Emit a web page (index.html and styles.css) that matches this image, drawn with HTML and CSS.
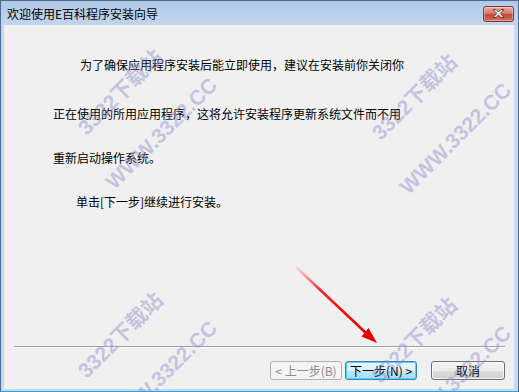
FILE: index.html
```html
<!DOCTYPE html>
<html lang="zh-CN">
<head>
  <meta charset="UTF-8">
  <title>欢迎使用E百科程序安装向导</title>
  <link rel="stylesheet" href="styles.css">
</head>
<body>
  <div class="window">
    <div class="titlebar">
      <span class="title">欢迎使用E百科程序安装向导</span>
      <div class="close-btn">
        <svg width="15" height="11" viewBox="0 0 15 11">
          <path d="M2 1.5 L5 1.5 L7.5 4 L10 1.5 L13 1.5 L9.2 5.5 L13 9.5 L10 9.5 L7.5 7 L5 9.5 L2 9.5 L5.8 5.5 Z" fill="#fff" stroke="#5a2a24" stroke-width="0.9" stroke-linejoin="round"/>
        </svg>
      </div>
    </div>

    <div class="client">
      <div class="content">
        <p class="line first">为了确保应用程序安装后能立即使用，建议在安装前你关闭你</p>
        <p class="line">正在使用的所用应用程序，这将允许安装程序更新系统文件而不用</p>
        <p class="line">重新启动操作系统。</p>
        <p class="line last">单击[下一步]继续进行安装。</p>
      </div>
      <div class="footer">
        <div class="separator"></div>
        <div class="buttons">
          <button class="btn disabled">&lt; 上一步(B)</button>
          <button class="btn default">下一步(N) &gt;</button>
          <button class="btn cancel">取消</button>
        </div>
      </div>
    </div>

    <!-- watermark overlay -->
    <div class="watermark wm-1"><span>3322下载站</span><span>WWW.3322.CC</span></div>
    <div class="watermark wm-2"><span>3322下载站</span><span>WWW.3322.CC</span></div>
    <div class="watermark wm-3"><span>3322下载站</span><span>WWW.3322.CC</span></div>
    <div class="watermark wm-4"><span>3322下载站</span><span>WWW.3322.CC</span></div>

    <svg class="arrow" width="519" height="392" viewBox="0 0 519 392">
      <defs>
        <linearGradient id="arrowFade" x1="297" y1="268" x2="366" y2="333" gradientUnits="userSpaceOnUse">
          <stop offset="0" stop-color="#ff3030" stop-opacity="0.15"/>
          <stop offset="0.35" stop-color="#f01010" stop-opacity="0.9"/>
          <stop offset="1" stop-color="#e80000"/>
        </linearGradient>
      </defs>
      <line x1="297" y1="268" x2="367" y2="334" stroke="url(#arrowFade)" stroke-width="2.6" stroke-linecap="round"/>
      <polygon points="377,343 361.5,336.5 368.5,328" fill="#e80000"/>
    </svg>
  </div>
</body>
</html>
```

FILE: styles.css
```css
body {
  margin: 0;
  padding: 0;
  font-family: "Noto Sans CJK SC", "Liberation Sans", sans-serif;
  font-size: 12px;
  color: #000;
  background-color: #f0f0f0;
}
.window {
  position: relative;
  width: 519px;
  height: 392px;
  box-sizing: border-box;
  background: linear-gradient(#b0c9e6, #c6d9ef 30px, #c6d9ef);
  border: 1px solid #4d6d8f;
  border-bottom: 1px solid #2aa6d6;
  overflow: hidden;
  display: flex;
  flex-direction: column;
}
.titlebar {
  height: 24px;
  display: flex;
  align-items: center;
  justify-content: space-between;
  padding: 0 4px 0 6px;
}
.title {
  font-size: 12px;
  line-height: 14px;
  color: #000;
  margin-top: 2px;
}
.close-btn {
  width: 29px;
  height: 14px;
  margin-top: 1px;
  border: 1px solid #7c3a33;
  border-radius: 3px;
  background: linear-gradient(#eab0a6, #d47868 45%, #c24634 55%, #d2735f);
  box-shadow: inset 0 0 0 1px rgba(255, 255, 255, 0.35);
  display: flex;
  align-items: center;
  justify-content: center;
}
.client {
  flex: 1;
  margin: 0 4px 2px 3px;
  background-color: #f0f0f0;
  display: flex;
  flex-direction: column;
}
.content {
  flex: 1;
  padding: 30px 0 0 49px;
}
.line {
  margin: 0 0 24px;
  line-height: 20px;
  white-space: nowrap;
}
.line.first {
  text-indent: 27px;
  margin-bottom: 29px;
}
.line.last {
  text-indent: 23px;
}
.footer {
  padding: 0 9px 9px 10px;
}
.separator {
  border-top: 1px solid #a0a0a0;
  border-bottom: 1px solid #fff;
  margin-bottom: 13px;
}
.buttons {
  display: flex;
  justify-content: flex-end;
}
.btn {
  height: 19px;
  width: 72px;
  padding: 0;
  font-family: "Noto Sans CJK SC", "Liberation Sans", sans-serif;
  font-size: 12px;
  line-height: 15px;
  color: #000;
  border: 1px solid #707070;
  border-radius: 3px;
  background: linear-gradient(#f2f2f2, #ebebeb 50%, #dddddd 51%, #cfcfcf);
  box-shadow: inset 0 0 0 1px rgba(255, 255, 255, 0.7);
}
.btn.disabled {
  color: #8d8d8d;
  border-color: #adb2b5;
  background: #f4f4f4;
  box-shadow: none;
}
.btn.default {
  margin-left: 3px;
  border-color: #3c7fb1;
  background: linear-gradient(#eaf6fd, #d9f0fc 50%, #bee6fd 51%, #a7d9f5);
  box-shadow: inset 0 0 0 1px #48d8fb;
}
.btn.cancel {
  width: 74px;
  margin-left: 14px;
}
.watermark {
  position: absolute;
  width: 240px;
  height: 116px;
  display: flex;
  flex-direction: column;
  align-items: center;
  font-family: "Liberation Sans", "Noto Sans CJK SC", sans-serif;
  font-weight: bold;
  font-size: 21px;
  line-height: 58px;
  color: rgba(140, 140, 205, 0.45);
  transform: rotate(-45deg);
  pointer-events: none;
  white-space: nowrap;
}
.wm-1 { left: 20px; top: 54px; }
.wm-2 { left: 314px; top: 59px; }
.wm-3 { left: 20px; top: 297px; }
.wm-4 { left: 314px; top: 302px; }
.arrow {
  position: absolute;
  left: -1px;
  top: -1px;
  pointer-events: none;
}
```
